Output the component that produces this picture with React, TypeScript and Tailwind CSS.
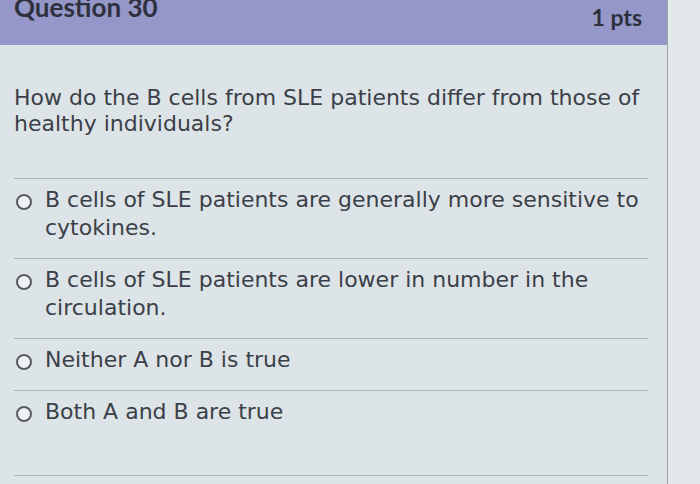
import * as React from "react"

const answers = [
  "B cells of SLE patients are generally more sensitive to cytokines.",
  "B cells of SLE patients are lower in number in the circulation.",
  "Neither A nor B is true",
  "Both A and B are true",
]

function Radio() {
  return (
    <span className="mt-[8px] inline-block h-[16px] w-[16px] shrink-0 rounded-full border-2 border-[#575b63] bg-[#eef2f4]" />
  )
}

export default function App() {
  return (
    <div className="flex h-[484px] w-[700px] overflow-hidden bg-[#e2e7ea] font-['DejaVu_Sans',sans-serif] text-[#3b3f47]">
      <div className="flex w-[668px] shrink-0 flex-col border-r border-[#9aa3aa] bg-[#dde4e7]">
        {/* Header */}
        <div className="flex h-[45px] shrink-0 items-start justify-between bg-[#9497c8] pl-[14px] pr-[25px] font-['Lato',sans-serif] font-bold text-[#2e303d]">
          <span className="-mt-[8px] text-[26px] leading-[30px]">Question 30</span>
          <span className="mt-[3px] text-[23px] leading-[28px]">1 pts</span>
        </div>

        {/* Question */}
        <p className="mx-[14px] mt-[40px] mb-[41px] text-[22px] leading-[26px]">
          How do the B cells from SLE patients differ from those of healthy individuals?
        </p>

        {/* Answers */}
        <div className="ml-[14px] mr-[19px] border-b border-[#aab4ba]">
          {answers.map((a, i) => (
            <div
              key={a}
              className={
                "flex gap-[13px] border-t border-[#aab4ba] pl-[2px] pt-[7px] " +
                (i === 3 ? "pb-[49px]" : "pb-[16px]")
              }
            >
              <Radio />
              <span className="text-[22px] leading-[28px]">{a}</span>
            </div>
          ))}
        </div>
      </div>
    </div>
  )
}
